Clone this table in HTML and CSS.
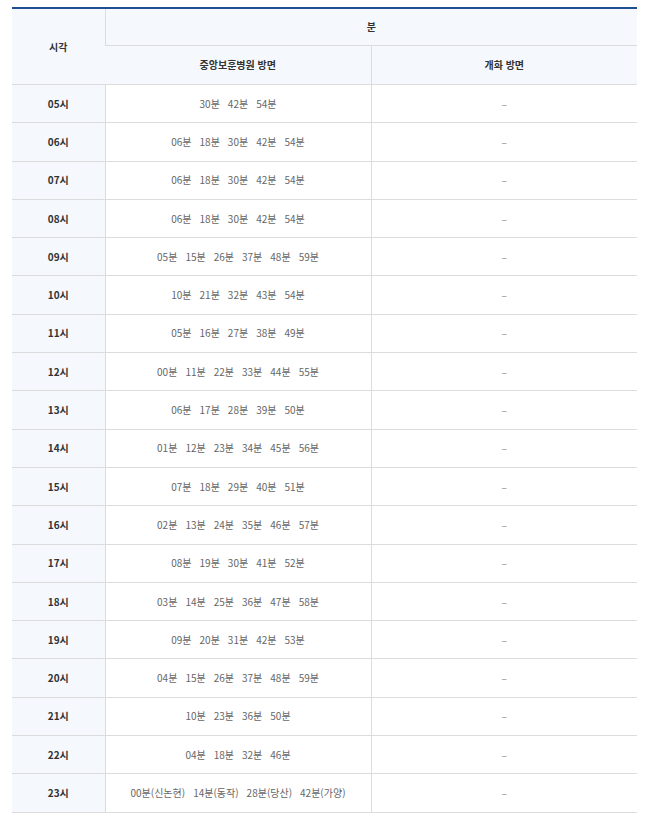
FILE: index.html
```html
<!DOCTYPE html>
<html lang="ko">
<head>
<meta charset="utf-8">
<title>시간표</title>
<link rel="stylesheet" href="styles.css">
</head>
<body>
<div class="wrap">
<table class="timetable">
  <colgroup>
    <col class="c-hour">
    <col class="c-dir">
    <col class="c-dir">
  </colgroup>
  <thead>
    <tr class="h1">
      <th rowspan="2" class="hour-head">시각</th>
      <th colspan="2">분</th>
    </tr>
    <tr class="h2">
      <th>중앙보훈병원 방면</th>
      <th>개화 방면</th>
    </tr>
  </thead>
  <tbody>
    <tr><th>05시</th><td><span>30분</span><span>42분</span><span>54분</span></td><td class="none">–</td></tr>
    <tr><th>06시</th><td><span>06분</span><span>18분</span><span>30분</span><span>42분</span><span>54분</span></td><td class="none">–</td></tr>
    <tr><th>07시</th><td><span>06분</span><span>18분</span><span>30분</span><span>42분</span><span>54분</span></td><td class="none">–</td></tr>
    <tr><th>08시</th><td><span>06분</span><span>18분</span><span>30분</span><span>42분</span><span>54분</span></td><td class="none">–</td></tr>
    <tr><th>09시</th><td><span>05분</span><span>15분</span><span>26분</span><span>37분</span><span>48분</span><span>59분</span></td><td class="none">–</td></tr>
    <tr><th>10시</th><td><span>10분</span><span>21분</span><span>32분</span><span>43분</span><span>54분</span></td><td class="none">–</td></tr>
    <tr><th>11시</th><td><span>05분</span><span>16분</span><span>27분</span><span>38분</span><span>49분</span></td><td class="none">–</td></tr>
    <tr><th>12시</th><td><span>00분</span><span>11분</span><span>22분</span><span>33분</span><span>44분</span><span>55분</span></td><td class="none">–</td></tr>
    <tr><th>13시</th><td><span>06분</span><span>17분</span><span>28분</span><span>39분</span><span>50분</span></td><td class="none">–</td></tr>
    <tr><th>14시</th><td><span>01분</span><span>12분</span><span>23분</span><span>34분</span><span>45분</span><span>56분</span></td><td class="none">–</td></tr>
    <tr><th>15시</th><td><span>07분</span><span>18분</span><span>29분</span><span>40분</span><span>51분</span></td><td class="none">–</td></tr>
    <tr><th>16시</th><td><span>02분</span><span>13분</span><span>24분</span><span>35분</span><span>46분</span><span>57분</span></td><td class="none">–</td></tr>
    <tr><th>17시</th><td><span>08분</span><span>19분</span><span>30분</span><span>41분</span><span>52분</span></td><td class="none">–</td></tr>
    <tr><th>18시</th><td><span>03분</span><span>14분</span><span>25분</span><span>36분</span><span>47분</span><span>58분</span></td><td class="none">–</td></tr>
    <tr><th>19시</th><td><span>09분</span><span>20분</span><span>31분</span><span>42분</span><span>53분</span></td><td class="none">–</td></tr>
    <tr><th>20시</th><td><span>04분</span><span>15분</span><span>26분</span><span>37분</span><span>48분</span><span>59분</span></td><td class="none">–</td></tr>
    <tr><th>21시</th><td><span>10분</span><span>23분</span><span>36분</span><span>50분</span></td><td class="none">–</td></tr>
    <tr><th>22시</th><td><span>04분</span><span>18분</span><span>32분</span><span>46분</span></td><td class="none">–</td></tr>
    <tr><th>23시</th><td><span>00분(신논현)</span><span>14분(동작)</span><span>28분(당산)</span><span>42분(가양)</span></td><td class="none">–</td></tr>
  </tbody>
</table>
</div>
</body>
</html>
```

FILE: styles.css
```css
html, body {
  margin: 0;
  padding: 0;
  background: #ffffff;
}

.wrap {
  padding: 7px 18px 0 12px;
}

.timetable {
  width: 625px;
  border-collapse: collapse;
  table-layout: fixed;
  border-top: 2px solid #1d4f91;
  font-family: "Noto Sans CJK KR", "Noto Sans", sans-serif;
  font-size: 10px;
  line-height: 16px;
}

.c-hour { width: 93px; }
.c-dir { width: 266px; }

.timetable th,
.timetable td {
  border-bottom: 1px solid #dcdcdc;
  border-left: 1px solid #dcdcdc;
  padding: 0;
  text-align: center;
  vertical-align: middle;
}

.timetable tr > :first-child {
  border-left: none;
}

.timetable thead th {
  background: #f5f9fd;
  color: #333333;
  font-weight: 700;
}

.timetable .h1 th { height: 36px; }
.timetable .h2 th { height: 38px; }

.timetable thead .hour-head {
  border-left: none;
}

.timetable tbody tr { height: 38.3px; }

.timetable tbody th {
  background: #f5f9fd;
  color: #333333;
  font-weight: 700;
}

.timetable tbody td {
  color: #666666;
}

.timetable tbody td span {
  display: inline-block;
  margin: 0 4px;
}

.timetable td.none {
  color: #888888;
}
```
